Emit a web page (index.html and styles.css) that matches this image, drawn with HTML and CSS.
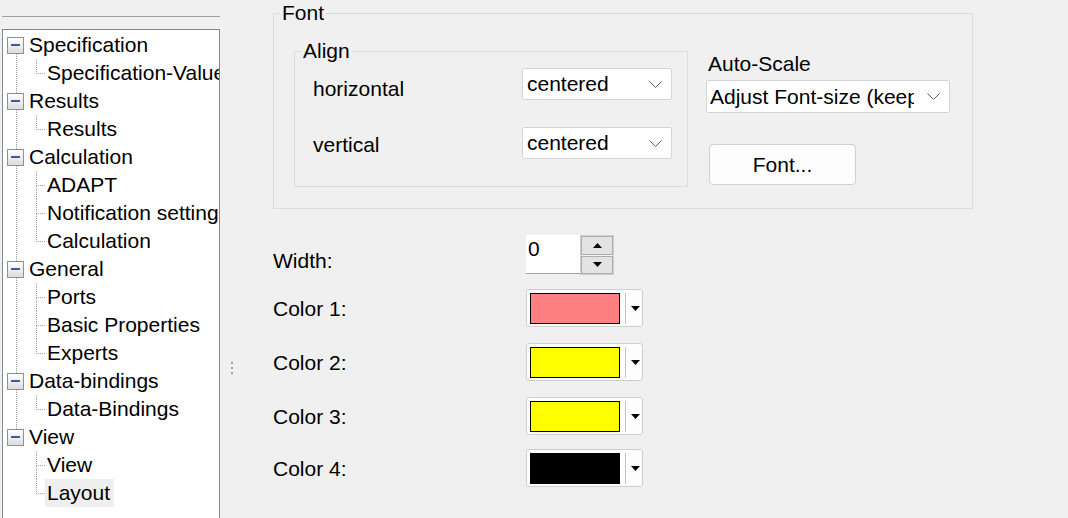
FILE: index.html
```html
<!DOCTYPE html>
<html>
<head>
<meta charset="utf-8">
<link rel="stylesheet" href="styles.css">
</head>
<body>
<div class="side">
  <div class="side-rule"></div>
  <div class="tree">
    <div class="tree-list">
      <div class="row root"><span class="exp"></span><span class="label">Specification</span></div>
      <div class="row child last"><span class="conn"><span class="conn-t"></span><span class="conn-b"></span></span><span class="clabel">Specification-Values</span></div>
      <div class="row root"><span class="exp"></span><span class="label">Results</span></div>
      <div class="row child last"><span class="conn"><span class="conn-t"></span><span class="conn-b"></span></span><span class="clabel">Results</span></div>
      <div class="row root"><span class="exp"></span><span class="label">Calculation</span></div>
      <div class="row child"><span class="conn"><span class="conn-t"></span><span class="conn-b"></span></span><span class="clabel">ADAPT</span></div>
      <div class="row child"><span class="conn"><span class="conn-t"></span><span class="conn-b"></span></span><span class="clabel">Notification settings</span></div>
      <div class="row child last"><span class="conn"><span class="conn-t"></span><span class="conn-b"></span></span><span class="clabel">Calculation</span></div>
      <div class="row root"><span class="exp"></span><span class="label">General</span></div>
      <div class="row child"><span class="conn"><span class="conn-t"></span><span class="conn-b"></span></span><span class="clabel">Ports</span></div>
      <div class="row child"><span class="conn"><span class="conn-t"></span><span class="conn-b"></span></span><span class="clabel">Basic Properties</span></div>
      <div class="row child last"><span class="conn"><span class="conn-t"></span><span class="conn-b"></span></span><span class="clabel">Experts</span></div>
      <div class="row root"><span class="exp"></span><span class="label">Data-bindings</span></div>
      <div class="row child last"><span class="conn"><span class="conn-t"></span><span class="conn-b"></span></span><span class="clabel">Data-Bindings</span></div>
      <div class="row root"><span class="exp"></span><span class="label">View</span></div>
      <div class="row child"><span class="conn"><span class="conn-t"></span><span class="conn-b"></span></span><span class="clabel">View</span></div>
      <div class="row child last"><span class="conn"><span class="conn-t"></span><span class="conn-b"></span></span><span class="clabel selected">Layout</span></div>
    </div>
  </div>
</div>

<div class="splitter">
  <div class="grip"><span></span><span></span><span></span></div>
</div>

<div class="main">
  <fieldset class="font-box">
    <legend>Font</legend>
    <div class="font-inner">
      <fieldset class="align-box">
        <legend>Align</legend>
        <div class="align-inner">
          <div class="align-row">
            <span class="align-label lbl-h">horizontal</span>
            <div class="combo small">
              <span class="combo-text">centered</span>
              <svg class="chev" width="13" height="7" viewBox="0 0 13 7"><path d="M0.5 0.5 L6.5 6.5 L12.5 0.5" fill="none" stroke="#5a5a5a" stroke-width="1"/></svg>
            </div>
          </div>
          <div class="align-row second">
            <span class="align-label lbl-v">vertical</span>
            <div class="combo small">
              <span class="combo-text">centered</span>
              <svg class="chev" width="13" height="7" viewBox="0 0 13 7"><path d="M0.5 0.5 L6.5 6.5 L12.5 0.5" fill="none" stroke="#5a5a5a" stroke-width="1"/></svg>
            </div>
          </div>
        </div>
      </fieldset>
      <div class="scale-col">
        <div class="scale-label">Auto-Scale</div>
        <div class="combo wide">
          <span class="combo-text clip">Adjust Font-size (keep ratio)</span>
          <svg class="chev" width="13" height="7" viewBox="0 0 13 7"><path d="M0.5 0.5 L6.5 6.5 L12.5 0.5" fill="none" stroke="#5a5a5a" stroke-width="1"/></svg>
        </div>
        <div class="btn">Font...</div>
      </div>
    </div>
  </fieldset>

  <div class="props">
    <div class="prop-row">
      <span class="prop-label lbl-width">Width:</span>
      <div class="spin">
        <div class="spin-input">0</div>
        <div class="spin-btns">
          <div class="spin-btn"><svg width="9" height="5" viewBox="0 0 9 5"><path d="M0 5 L4.5 0 L9 5 Z" fill="#000"/></svg></div>
          <div class="spin-btn"><svg width="9" height="5" viewBox="0 0 9 5"><path d="M0 0 L9 0 L4.5 5 Z" fill="#000"/></svg></div>
        </div>
      </div>
    </div>
    <div class="prop-row color-row r1">
      <span class="prop-label lbl-color">Color 1:</span>
      <div class="picker"><span class="swatch c-pink"></span><span class="sep"></span><svg class="parrow" width="9" height="5" viewBox="0 0 9 5"><path d="M0 0 L9 0 L4.5 5 Z" fill="#000"/></svg></div>
    </div>
    <div class="prop-row color-row r2">
      <span class="prop-label lbl-color">Color 2:</span>
      <div class="picker"><span class="swatch c-yellow"></span><span class="sep"></span><svg class="parrow" width="9" height="5" viewBox="0 0 9 5"><path d="M0 0 L9 0 L4.5 5 Z" fill="#000"/></svg></div>
    </div>
    <div class="prop-row color-row r3">
      <span class="prop-label lbl-color">Color 3:</span>
      <div class="picker"><span class="swatch c-yellow"></span><span class="sep"></span><svg class="parrow" width="9" height="5" viewBox="0 0 9 5"><path d="M0 0 L9 0 L4.5 5 Z" fill="#000"/></svg></div>
    </div>
    <div class="prop-row color-row r4">
      <span class="prop-label lbl-color">Color 4:</span>
      <div class="picker"><span class="swatch c-black"></span><span class="sep"></span><svg class="parrow" width="9" height="5" viewBox="0 0 9 5"><path d="M0 0 L9 0 L4.5 5 Z" fill="#000"/></svg></div>
    </div>
  </div>
</div>
</body>
</html>
```

FILE: styles.css
```css
* { box-sizing: border-box; }
html, body { margin: 0; padding: 0; }
body {
  width: 1068px;
  height: 518px;
  overflow: hidden;
  background: #f0f0f0;
  color: #000;
  font-family: "Liberation Sans", Arial, sans-serif;
  font-size: 21px;
  line-height: 24px;
  display: flex;
  align-items: flex-start;
}

/* ---------- left tree ---------- */
.side { width: 220px; flex-shrink: 0; padding-left: 2px; }
.side-rule { margin-top: 16px; height: 1px; background: #a0a0a0; }
.tree {
  margin-top: 12px;
  height: 489px;
  background: #fff;
  border: 1px solid #828790;
  border-bottom: none;
  padding-top: 1px;
  overflow: hidden;
}
.tree-list { position: relative; }
.tree-list::before {
  content: "";
  position: absolute;
  left: 13px;
  top: 14px;
  height: 392px;
  border-left: 1px dotted #a0a0a0;
}
.row { height: 28px; display: flex; align-items: center; white-space: nowrap; line-height: 28px; }
.root { padding-left: 4px; }
.exp {
  position: relative;
  z-index: 1;
  flex-shrink: 0;
  width: 17px;
  height: 17px;
  margin-right: 4px;
  border: 1px solid #919191;
  background: linear-gradient(#ffffff, #dcdcdc);
  display: flex;
  align-items: center;
  justify-content: center;
}
.exp::after { content: ""; width: 9px; height: 2px; background: #3c5a9c; }
.label { padding: 0 3px 0 1px; }
.child { padding-left: 33px; align-items: stretch; }
.conn { width: 9px; flex-shrink: 0; display: flex; flex-direction: column; }
.conn-t { height: 15px; border-left: 1px dotted #a0a0a0; border-bottom: 1px dotted #a0a0a0; }
.conn-b { flex: 1; border-left: 1px dotted #a0a0a0; }
.last .conn-b { border-left: none; }
.clabel { padding: 0 4px 0 2px; }
.clabel.selected { background: #efefef; }

/* ---------- splitter ---------- */
.splitter { width: 53px; flex-shrink: 0; padding-left: 11px; padding-top: 362px; }
.grip { display: flex; flex-direction: column; gap: 3px; }
.grip span { width: 2px; height: 2px; background: #a6a6a6; }

/* ---------- main ---------- */
.main { padding-top: 1px; }
fieldset { margin: 0; padding: 0; border: 1px solid #dcdcdc; min-width: 0; }
legend { padding: 0 2px; margin-left: 6px; line-height: 24px; }
.font-box { width: 700px; }
.font-inner { display: flex; align-items: flex-start; padding: 14px 0 21px 20px; }
.align-box { width: 394px; }
.align-inner { padding: 5px 0 27px 18px; }
.align-row { display: flex; align-items: center; height: 32px; }
.align-row.second { margin-top: 27px; }
.align-label { width: 209px; }
.lbl-h { margin-top: 10px; }
.lbl-v { margin-top: 4px; }

.combo {
  height: 32px;
  background: #fff;
  border: 1px solid #d5d5d5;
  border-radius: 2px;
  display: flex;
  align-items: center;
  padding: 0 9px 0 4px;
}
.combo.small { width: 150px; }
.combo.wide { width: 244px; height: 33px; padding-left: 3px; margin-top: 4px; }
.combo-text { white-space: nowrap; }
.combo-text.clip { width: 204px; overflow: hidden; }
.chev { margin-left: auto; flex-shrink: 0; }

.scale-col { margin-left: 18px; padding-top: 13px; }
.scale-label { padding-left: 2px; }
.btn {
  margin: 31px 0 0 3px;
  width: 147px;
  height: 41px;
  background: #fdfdfd;
  border: 1px solid #d0d0d0;
  border-radius: 4px;
  display: flex;
  align-items: center;
  justify-content: center;
}

.props { margin-top: 26px; }
.prop-row { display: flex; align-items: center; }
.r1 { margin-top: 14px; }
.r2, .r3 { margin-top: 16px; }
.r4 { margin-top: 14px; }
.prop-label { width: 253px; }
.lbl-width { margin-top: 12px; }
.lbl-color { margin-top: 2px; }

.spin { display: flex; height: 40px; }
.spin-input {
  width: 54px;
  height: 39px;
  background: #fff;
  border-bottom: 1px solid #a0a0a0;
  padding: 2px 2px;
}
.spin-btns {
  width: 34px;
  height: 40px;
  border: 1px solid #cfcfcf;
  display: flex;
  flex-direction: column;
  gap: 1px;
}
.spin-btn {
  flex: 1;
  background: #e3e3e3;
  border: 1px solid #adadad;
  display: flex;
  align-items: center;
  justify-content: center;
}

.picker {
  width: 117px;
  height: 38px;
  background: #fdfdfd;
  border: 1px solid #cfcfcf;
  border-radius: 3px;
  display: flex;
  align-items: center;
  padding-left: 3px;
}
.swatch { width: 90px; height: 31px; border: 1px solid #000; }
.c-pink { background: #ff8080; }
.c-yellow { background: #ffff00; }
.c-black { background: #000; }
.sep { width: 1px; height: 31px; background: #c4c4c4; margin-left: 5px; }
.parrow { margin-left: 5px; }
```
